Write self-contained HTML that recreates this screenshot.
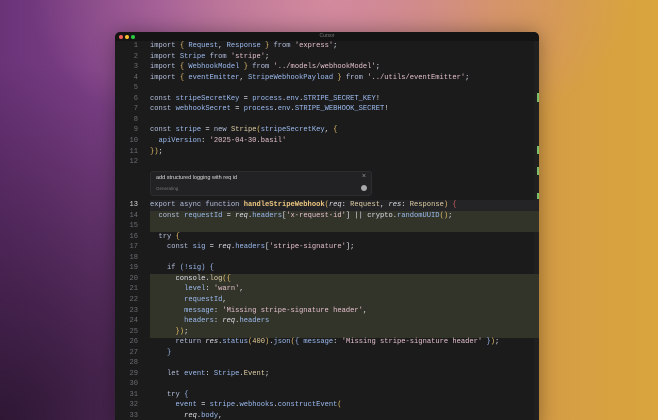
<!DOCTYPE html>
<html><head><meta charset="utf-8"><style>
*{margin:0;padding:0;box-sizing:border-box}
html,body{width:658px;height:420px;overflow:hidden}
body{position:relative;background:
radial-gradient(ellipse 300px 160px at 330px 0px,rgba(215,140,160,.85),rgba(215,140,160,0) 100%),
radial-gradient(ellipse 420px 360px at 0px 420px,rgba(40,20,45,.9),rgba(40,20,45,0) 100%),
linear-gradient(90deg,#6a3378 0%,#8a4a92 25%,#b87a90 50%,#d4994a 75%,#d9a53c 100%);}
.win{position:absolute;left:115px;top:32px;width:424px;height:400px;background:#1b1b1c;border-radius:5px 5px 0 0;overflow:hidden;box-shadow:0 0 20px rgba(0,0,0,.35)}
.tb{height:9px;background:#141415;position:relative;font:5px "Liberation Sans",sans-serif;color:#777;text-align:center;line-height:9px}
.d{position:absolute;top:2.5px;width:4px;height:4px;border-radius:50%}
.code{position:absolute;left:0;top:9px;width:100%;font-family:"Liberation Mono",monospace;font-size:7.1px;color:#dde0e8}
.lo{position:absolute;left:0;top:-9.5px;width:100%;height:400px}
.l{position:absolute;left:0;width:100%;height:10.55px;line-height:10.55px;white-space:pre}
.n{position:absolute;right:401px;width:30px;text-align:right;color:#6a6d73}
.t{position:absolute;left:35px}
.hl{position:absolute;left:35px;right:0;background:#32342a}
.k{color:#b4bfdc}.s{color:#e4c0cc}.b{color:#e6c06a}.f{color:#efc880;font-weight:bold}.p{color:#9dbcf0}.ty{color:#e0d0a6}.i{font-style:italic}.r{color:#d06060}.num{color:#e8d098}
.pr{position:absolute;left:35px;top:130px;width:222px;height:25px;background:#222224;border:1px solid #2d2d30;border-radius:3px;font-family:"Liberation Sans",sans-serif}
</style></head><body>
<div class="win">
<div class="tb"><span class="d" style="left:4px;background:#ee5f57"></span><span class="d" style="left:10px;background:#f5bd2f"></span><span class="d" style="left:16px;background:#2ac840"></span>Cursor</div>
<div style="position:absolute;right:0;top:9px;width:5px;height:400px;background:#202021"></div>
<div style="position:absolute;right:0;top:61px;width:2px;height:9px;background:#7bbf6a"></div>
<div style="position:absolute;right:0;top:114px;width:2px;height:8px;background:#7bbf6a"></div>
<div style="position:absolute;right:0;top:135px;width:2px;height:8px;background:#7bbf6a"></div>
<div style="position:absolute;right:0;top:161px;width:2px;height:6px;background:#7bbf6a"></div>
<div class="code">
<div class="l" style="top:0"><span class="n">1</span><span class="t"><span class="k">import</span> <span class="b">{</span> <span class="p">Request</span>, <span class="p">Response</span> <span class="b">}</span> <span class="k">from</span> <span class="s">'express'</span>;</span></div>
<div class="l" style="top:10.55px"><span class="n">2</span><span class="t"><span class="k">import</span> <span class="p">Stripe</span> <span class="k">from</span> <span class="s">'stripe'</span>;</span></div>
<div class="l" style="top:21.1px"><span class="n">3</span><span class="t"><span class="k">import</span> <span class="b">{</span> <span class="p">WebhookModel</span> <span class="b">}</span> <span class="k">from</span> <span class="s">'../models/webhookModel'</span>;</span></div>
<div class="l" style="top:31.65px"><span class="n">4</span><span class="t"><span class="k">import</span> <span class="b">{</span> <span class="p">eventEmitter</span>, <span class="p">StripeWebhookPayload</span> <span class="b">}</span> <span class="k">from</span> <span class="s">'../utils/eventEmitter'</span>;</span></div>
<div class="l" style="top:42.2px"><span class="n">5</span></div>
<div class="l" style="top:52.75px"><span class="n">6</span><span class="t"><span class="k">const</span> <span class="p">stripeSecretKey</span> = <span class="p">process</span>.<span class="p">env</span>.<span class="p">STRIPE_SECRET_KEY</span>!</span></div>
<div class="l" style="top:63.3px"><span class="n">7</span><span class="t"><span class="k">const</span> <span class="p">webhookSecret</span> = <span class="p">process</span>.<span class="p">env</span>.<span class="p">STRIPE_WEBHOOK_SECRET</span>!</span></div>
<div class="l" style="top:73.85px"><span class="n">8</span></div>
<div class="l" style="top:84.4px"><span class="n">9</span><span class="t"><span class="k">const</span> <span class="p">stripe</span> = <span class="k">new</span> <span class="ty">Stripe</span><span class="b">(</span><span class="p">stripeSecretKey</span>, <span class="b">{</span></span></div>
<div class="l" style="top:94.95px"><span class="n">10</span><span class="t">  <span class="p">apiVersion</span>: <span class="s">'2025-04-30.basil'</span></span></div>
<div class="l" style="top:105.5px"><span class="n">11</span><span class="t"><span class="b">})</span>;</span></div>
<div class="l" style="top:116.05px"><span class="n">12</span></div>
<div class="pr"><div style="position:absolute;left:5px;top:3px;font-size:5.5px;color:#ddd">add structured logging with req id</div><div style="position:absolute;right:5px;top:1px;font-size:7px;color:#999">×</div><div style="position:absolute;left:5px;top:14px;font-size:4.5px;color:#777">Generating</div><div style="position:absolute;right:4px;top:13px;width:6px;height:6px;border-radius:50%;background:#aaa"></div></div>
<div class="lo">
<div class="hl" style="top:179px;height:21px"></div>
<div class="hl" style="top:242px;height:64px"></div>
<div style="position:absolute;left:35px;right:0;top:168.5px;height:10.5px;background:#242426"></div>
<div class="l" style="top:168.5px"><span class="n" style="color:#ddd">13</span><span class="t"><span class="k">export</span> <span class="k">async</span> <span class="k">function</span> <span class="f">handleStripeWebhook</span><span class="b">(</span><span class="i">req</span>: <span class="ty">Request</span>, <span class="i">res</span>: <span class="ty">Response</span><span class="b">)</span> <span class="r">{</span></span></div>
<div class="l" style="top:179.05px"><span class="n">14</span><span class="t">  <span class="k">const</span> <span class="p">requestId</span> = <span class="i">req</span>.<span class="p">headers</span>[<span class="s">'x-request-id'</span>] || crypto.<span class="p">randomUUID</span><span class="b">()</span>;</span></div>
<div class="l" style="top:189.6px"><span class="n">15</span></div>
<div class="l" style="top:200.15px"><span class="n">16</span><span class="t">  <span class="k">try</span> <span class="b">{</span></span></div>
<div class="l" style="top:210.7px"><span class="n">17</span><span class="t">    <span class="k">const</span> <span class="p">sig</span> = <span class="i">req</span>.<span class="p">headers</span>[<span class="s">'stripe-signature'</span>];</span></div>
<div class="l" style="top:221.25px"><span class="n">18</span></div>
<div class="l" style="top:231.8px"><span class="n">19</span><span class="t">    <span class="k">if</span> <span class="p">(!sig)</span> <span class="p">{</span></span></div>
<div class="l" style="top:242.35px"><span class="n">20</span><span class="t">      console.<span class="ty">log</span><span class="b">({</span></span></div>
<div class="l" style="top:252.9px"><span class="n">21</span><span class="t">        <span class="p">level</span>: <span class="s">'warn'</span>,</span></div>
<div class="l" style="top:263.45px"><span class="n">22</span><span class="t">        <span class="p">requestId</span>,</span></div>
<div class="l" style="top:274px"><span class="n">23</span><span class="t">        <span class="p">message</span>: <span class="s">'Missing stripe-signature header'</span>,</span></div>
<div class="l" style="top:284.55px"><span class="n">24</span><span class="t">        <span class="p">headers</span>: <span class="i">req</span>.<span class="p">headers</span></span></div>
<div class="l" style="top:295.1px"><span class="n">25</span><span class="t">      <span class="b">})</span>;</span></div>
<div class="l" style="top:305.65px"><span class="n">26</span><span class="t">      <span class="k">return</span> <span class="i">res</span>.<span class="p">status</span><span class="b">(</span><span class="num">400</span><span class="b">)</span>.<span class="p">json</span><span class="b">(</span><span class="p">{</span> <span class="p">message</span>: <span class="s">'Missing stripe-signature header'</span> <span class="p">}</span><span class="b">)</span>;</span></div>
<div class="l" style="top:316.2px"><span class="n">27</span><span class="t">    <span class="p">}</span></span></div>
<div class="l" style="top:326.75px"><span class="n">28</span></div>
<div class="l" style="top:337.3px"><span class="n">29</span><span class="t">    <span class="k">let</span> <span class="p">event</span>: <span class="p">Stripe</span>.<span class="ty">Event</span>;</span></div>
<div class="l" style="top:347.85px"><span class="n">30</span></div>
<div class="l" style="top:358.4px"><span class="n">31</span><span class="t">    <span class="k">try</span> <span class="p">{</span></span></div>
<div class="l" style="top:368.95px"><span class="n">32</span><span class="t">      <span class="p">event</span> = <span class="p">stripe</span>.<span class="p">webhooks</span>.<span class="p">constructEvent</span><span class="b">(</span></span></div>
<div class="l" style="top:379.5px"><span class="n">33</span><span class="t">        <span class="i">req</span>.<span class="p">body</span>,</span></div>
</div>
</div></div>
</body></html>
